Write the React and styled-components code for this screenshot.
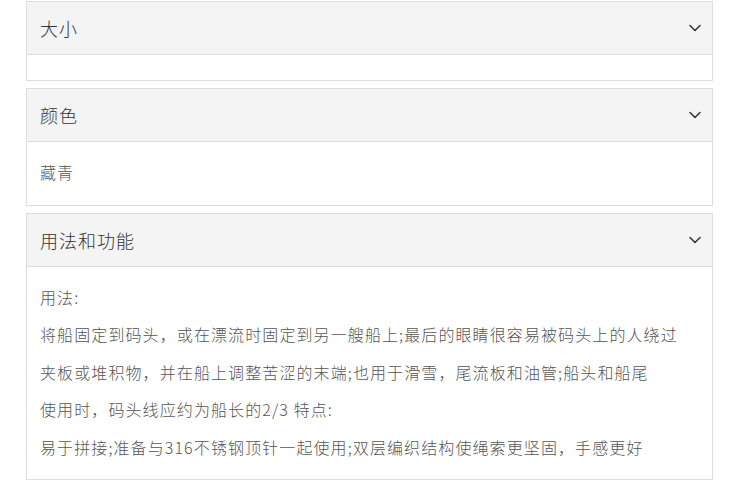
import React from 'react';
import styled, { createGlobalStyle } from 'styled-components';
import { ChevronDown } from 'lucide-react';

const GlobalStyle = createGlobalStyle`
  html, body {
    margin: 0;
    padding: 0;
    background: #ffffff;
  }
  body {
    font-family: "Noto Sans CJK SC", "Noto Sans", sans-serif;
  }
`;

const sections = [
    { title: '大小', lines: [] },
    { title: '颜色', lines: ['藏青'] },
    {
        title: '用法和功能',
        lines: [
            '用法:',
            '将船固定到码头，或在漂流时固定到另一艘船上;最后的眼睛很容易被码头上的人绕过',
            '夹板或堆积物，并在船上调整苦涩的末端;也用于滑雪，尾流板和油管;船头和船尾',
            '使用时，码头线应约为船长的2/3 特点:',
            '易于拼接;准备与316不锈钢顶针一起使用;双层编织结构使绳索更坚固，手感更好',
        ],
    },
];

function Section(props) {
    const { title, lines } = props;

    return (
        <Panel>
            <Header>
                <Title>{title}</Title>
                <ChevronDown size={20} strokeWidth={1.8} color="#333" />
            </Header>
            <Body>
                {lines.map((line, index) => <Line key={index}>{line}</Line>)}
            </Body>
        </Panel>
    );
}

export default function App() {
    return (
        <Page>
            <GlobalStyle />
            {sections.map((item, index) => <Section key={index} {...item} />)}
        </Page>
    );
}

const Page = styled.div`
    width: 687px;
    padding: 1px 0 0 26px;
    display: flex;
    flex-direction: column;
    gap: 7px;
`;
const Panel = styled.div`
    border: 1px solid #dddddd;
    background: #ffffff;
`;
const Header = styled.div`
    height: 52px;
    display: flex;
    align-items: center;
    justify-content: space-between;
    padding: 0 7px 0 13px;
    background: #f4f4f4;
    border-bottom: 1px solid #dddddd;
`;
const Title = styled.div`
    color: #333333;
    font-size: 18px;
    font-weight: 300;
    letter-spacing: 1px;
`;
const Body = styled.div`
    padding: 12px 13px 13px;
`;
const Line = styled.div`
    color: #555555;
    font-size: 16px;
    font-weight: 300;
    letter-spacing: 1.1px;
    line-height: 37.5px;
    white-space: nowrap;
`;
